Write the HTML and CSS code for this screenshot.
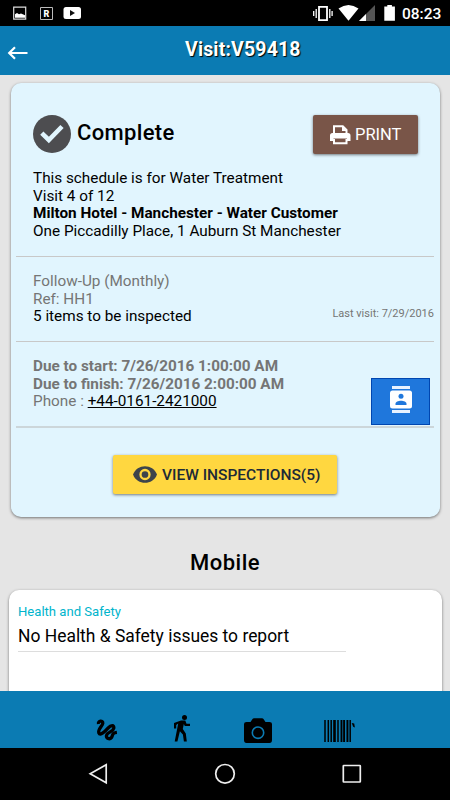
FILE: index.html
```html
<!DOCTYPE html>
<html lang="en">
<head>
<meta charset="utf-8">
<title>Visit:V59418</title>
<link rel="stylesheet" href="styles.css">
</head>
<body>
<div class="screen">
  <div class="statusbar">
    <svg class="notifications" width="90" height="26" viewBox="0 0 90 26">
      <path d="M13.7 7.2h12v12h-12z" fill="none" stroke="#ddd" stroke-width="1.2"/>
      <path d="M15 17.8v-3.6l2-1.3 2 1.3 2-.8 4 1.9v2.5z" fill="#fff"/>
      <path d="M40.5 7.5h12v12h-12z" fill="none" stroke="#bbb"/>
      <text x="43.4" y="17" class="badge-letter">R</text>
      <rect x="63.5" y="7" width="17.5" height="12" rx="2.5" fill="#fff"/>
      <path d="M70 10v6l5-3z" fill="#111"/>
    </svg>
    <svg class="signals" width="90" height="26" viewBox="310 0 90 26">
      <path d="M319 6.8h8v13.4h-8z" fill="none" stroke="#fff" stroke-width="1.8"/>
      <path d="M313.7 11v5M316.2 9v9M329.8 9v9M332.1 11v5" stroke="#fff" stroke-width="1.3"/>
      <path d="M338.5 8.5Q348.5 1.5 358.5 8.5L348.5 20.7z" fill="#fff"/>
      <path d="M375 5v16h-16z" fill="#555"/>
      <path d="M366 14v7h-7z" fill="#fff"/>
      <path d="M384.3 6.5h3V5h4.6v1.500h3v14.300h-10.600z" fill="#fff"/>
    </svg>
    <span class="clock">08:23</span>
  </div>
  <header class="topbar">
    <svg class="back" width="22" height="16" viewBox="0 0 22 16"><path d="M20.500 8H2M8 2.200 2.200 8l5.800 5.800" fill="none" stroke="#fff" stroke-width="2.200"/></svg>
    <h1 class="title">Visit:V59418</h1>
  </header>
  <main class="content">
    <section class="card visit">
      <div class="head">
        <svg width="38" height="38" viewBox="0 0 38 38"><circle cx="19" cy="19" r="19" fill="#4d4d50"/><path d="M8.800 18.200l7 6.800L29 11.500" fill="none" stroke="#e1f5fe" stroke-width="4.600"/></svg>
        <h2 class="state">Complete</h2>
        <button class="print">
          <svg width="21" height="20" viewBox="0 0 21 20"><path d="M4 9V1.300h8.800l3.700 3.600V9M4 14v4.200h12.500V14" fill="none" stroke="#fff" stroke-width="2"/><path d="M12 1v5h5M12 1l5 5" fill="#fff"/><path d="M2.500 8h15.500q2.500 0 2.500 2.500V16H17v-2.500H3.500V16H0v-5.500Q0 8 2.500 8z" fill="#fff"/></svg>
          <span class="print-label">PRINT</span>
        </button>
      </div>
      <div class="block about">
        <p>This schedule is for Water Treatment</p>
        <p>Visit 4 of 12</p>
        <p class="strong">Milton Hotel - Manchester - Water Customer</p>
        <p>One Piccadilly Place, 1 Auburn St Manchester</p>
      </div>
      <div class="block work">
        <div>
          <p class="muted">Follow-Up (Monthly)</p>
          <p class="muted">Ref: HH1</p>
          <p>5 items to be inspected</p>
        </div>
        <span class="last">Last visit: 7/29/2016</span>
      </div>
      <div class="block due">
        <div>
          <p class="muted strong">Due to start: 7/26/2016 1:00:00 AM</p>
          <p class="muted strong">Due to finish: 7/26/2016 2:00:00 AM</p>
          <p class="muted">Phone : <a class="phone">+44-0161-2421000</a></p>
        </div>
        <button class="contact">
          <svg width="24" height="28" viewBox="0 0 24 28"><path d="M3 0h18v3H3zM3 24h18v3H3z" fill="#e8f2ff"/><rect x="1" y="4.500" width="22" height="18" rx="2.500" fill="#fff"/><circle cx="12" cy="10.300" r="2.500" fill="#1f77dc"/><path d="M6.500 19v-1.300c0-4 11-4 11 0V19z" fill="#1f77dc"/></svg>
        </button>
      </div>
      <button class="view">
        <svg width="24" height="17" viewBox="0 0 24 17"><path d="M0 8.500C4-2.600 20-2.600 24 8.500 20 19.600 4 19.600 0 8.500z" fill="#3d444b"/><circle cx="12" cy="8.500" r="4.500" fill="#3d444b" stroke="#ffd740" stroke-width="2.300"/></svg>
        <span class="view-label">VIEW INSPECTIONS(5)</span>
      </button>
    </section>
    <h2 class="section-title">Mobile</h2>
    <section class="card form">
      <label class="field-label">Health and Safety</label>
      <div class="field">No Health &amp; Safety issues to report</div>
    </section>
  </main>
  <footer class="toolbar">
    <svg width="450" height="57" viewBox="0 691 450 57">
      <path d="M98.500 724c-.8-3.500 4.600-3.700 4.300-.7-.3 2.600-5.100 6.200-4 9.500 1.400 3.500 6.500-1.500 9.200-4.600 3-3.400 6.400-3.300 5.800 0-.7 3.800-6.200 3.500-7.300 7.200-.6 3.200 3.200 4.300 4.900 2.200 1.800-2.200 0-4.800 5.500-5.300" fill="none" stroke="#000" stroke-width="3.300"/>
      <circle cx="184.500" cy="717.400" r="2.500"/>
      <path d="M181 720.500h4.300l1.200 3.300h3.500v2.300h-5.200l-1-2-1 5 3 4.300 1 8.100h-2.900l-1-7-3-3.300-2.500 10.300h-2.700l3.500-18-2 1.500v3.500h-2.200v-5.500z"/>
      <path d="M244 724q0-2 2.500-2h4l2-3q.5-.7 1.500-.7h8q1 0 1.500.7l2 3h4q2.500 0 2.500 2v16q0 3-2.500 3h-23q-2.500 0-2.500-3z"/>
      <circle cx="258" cy="732.700" r="5.700" fill="none" stroke="#0b7bb3" stroke-width="1.600"/>
      <path d="M325 720v22M328.300 720v22M331.200 720v22M334.500 720v22M338 720v22M341.300 720v22M344.300 720v22M347.500 720v22M350.200 720v22" stroke="#000" stroke-width="1.500"/>
      <path d="M333 720h3v22h-3zM342.500 720h2.500v22h-2.500zM346.500 720h1.800v22h-1.800z" opacity=".75"/>
      <path d="M351.700 723l2.500.5.700 4-1.700-.8z"/>
    </svg>
  </footer>
  <nav class="navbar">
    <svg width="450" height="52" viewBox="0 748 450 52" fill="none" stroke="#eee" stroke-width="1.700">
      <path d="M106.200 764.800v18L90.200 773.800z"/><circle cx="225" cy="773.800" r="9.300"/><rect x="343.300" y="765.500" width="17" height="16.500" rx=".5"/>
    </svg>
  </nav>
</div>
</body>
</html>
```
FILE: styles.css
```css
* { box-sizing: border-box; margin: 0; padding: 0; }
body { font-family: Roboto, "Liberation Sans", sans-serif; color: #000; }
svg { display: block; flex: none; }
button { border: 0; font: inherit; display: flex; align-items: center; flex: none; }
.screen { width: 450px; height: 800px; display: flex; flex-direction: column; overflow: hidden; background: #e5e5e5; }
.statusbar { height: 26px; flex: none; background: #000; display: flex; align-items: center; }
.badge-letter { font: 900 9px Roboto, sans-serif; fill: #fff; }
.signals { margin-left: 220px; }
.clock { margin-left: 2px; color: #fff; font-size: 15.500px; font-weight: 500; line-height: 26px; padding-top: 2px; }
.topbar { height: 49px; flex: none; background: #0b7bb3; display: flex; align-items: flex-start; padding: 0 0 0 7px; }
.back { margin-top: 19px; }
.title { margin: 12px 0 0 156px; font-size: 19.500px; line-height: 24px; font-weight: 700; color: #fff; text-shadow: 1px 1px 1px #000; letter-spacing: .15px; }
.content { flex: 1; min-height: 0; overflow: hidden; padding-top: 8px; }
.card { box-shadow: 0 1px 3px rgba(0,0,0,.5); }
.visit { height: 434px; margin: 0 10px 0 11px; border-radius: 10px; background: #e1f5fe; padding: 32px 6px 0 5px; }
.head { display: flex; height: 48px; align-items: flex-start; padding-left: 17px; }
.state { margin: 3px 0 0 6px; font-size: 22px; line-height: 30px; font-weight: 500; letter-spacing: .35px; }
.print { margin: 0 16px 0 auto; width: 105px; height: 39px; border-radius: 2px; background: #795548; color: #fff; padding-left: 17px; gap: 4px; box-shadow: 0 1px 3px rgba(0,0,0,.5); }
.print-label { font-size: 16.500px; }
.block { border-bottom: 1px solid #c8c8c8; padding-left: 17px; font-size: 15.300px; line-height: 17.500px; }
.about { height: 94px; padding-top: 7px; }
.work { height: 85px; padding-top: 16px; display: flex; justify-content: space-between; }
.due { height: 86px; padding-top: 16px; display: flex; justify-content: space-between; border-bottom: 2px solid #ccd6da; }
.muted { color: #757575; }
.strong { font-weight: 700; }
.last { font-size: 11px; line-height: 14px; margin-top: 34px; color: #757575; }
.phone { color: #000; text-decoration: underline; }
.contact { width: 59px; height: 47px; margin: 20px 4px 0 0; background: #1f77dc; border: 1px solid #0046b0; justify-content: center; }
.contact svg { margin-top: -3px; }
.view { margin: 27px 0 0 97px; width: 224px; height: 39px; border-radius: 2px; background: #ffd740; padding-left: 20px; gap: 5px; box-shadow: 0 1px 3px rgba(0,0,0,.5); }
.view-label { font-size: 15.500px; font-weight: 500; color: #202a36; white-space: nowrap; }
.section-title { height: 73px; padding-top: 32px; text-align: center; font-size: 22px; line-height: 28px; font-weight: 500; letter-spacing: .5px; }
.form { height: 150px; margin: 0 8px 0 9px; border-radius: 10px; background: #fff; padding: 13px 9px; }
.field-label { display: block; font-size: 13.100px; line-height: 17px; color: #00b4cc; }
.field { width: 328px; height: 32px; border-bottom: 1px solid #ddd; font-size: 17.450px; line-height: 33px; }
.toolbar { height: 57px; flex: none; background: #0b7bb3; }
.navbar { height: 52px; flex: none; background: #000; }
```
